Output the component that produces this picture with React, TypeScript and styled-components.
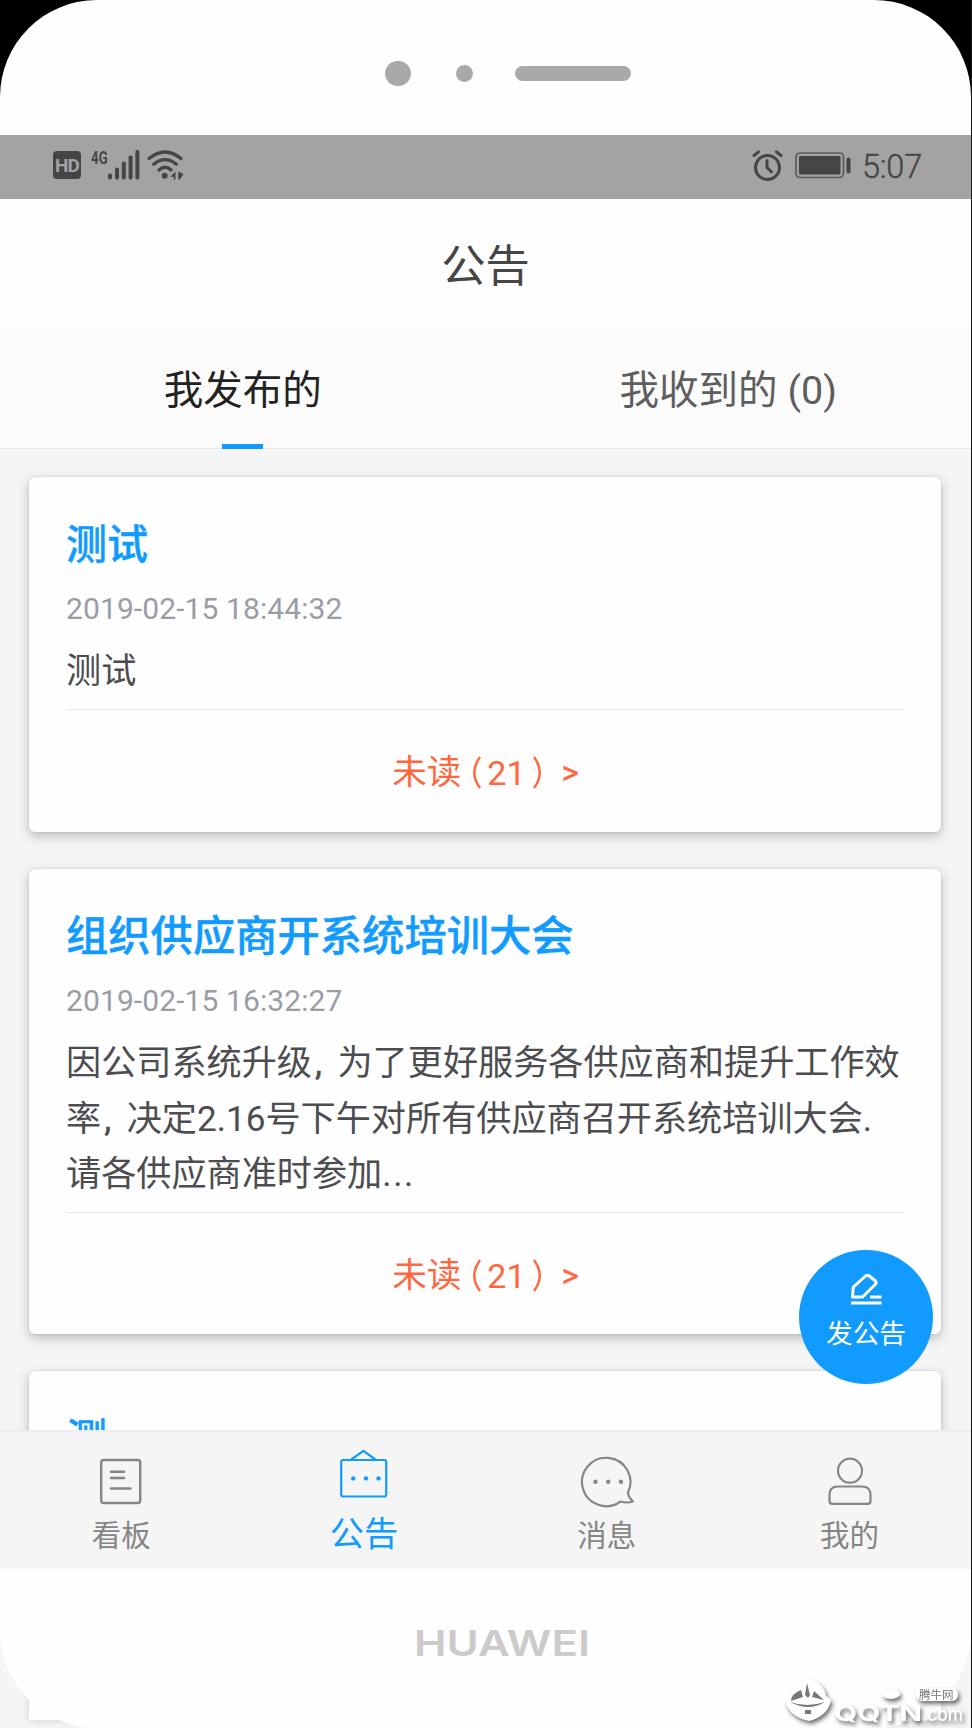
import React from 'react';
import styled, { createGlobalStyle } from 'styled-components';

const BLUE = '#129bff';
const INK = '#454545';
const GREY = '#858585';
const ORANGE = '#ff673f';

const GlobalStyle = createGlobalStyle`
  * { box-sizing: border-box; }
  html, body { margin: 0; padding: 0; }
  body {
    font-family: Roboto, 'Noto Sans CJK SC', sans-serif;
    background: #f5f5f5;
    overflow: hidden;
  }
  svg { display: block; flex: none; }
`;

const Phone = styled.div`
  position: relative;
  display: flex;
  flex-direction: column;
  width: 972px;
  height: 1728px;
  border-right: 1px solid #14171a;
  background: #f5f5f5;
  overflow: hidden;
`;

const TopBezel = styled.div`
  flex: none;
  height: 135px;
  background: #000;
`;

const TopShell = styled.div`
  display: flex;
  align-items: center;
  height: 135px;
  padding: 11px 0 0 385px;
  border-radius: 97px 97px 0 0;
  background: #fefefe;
`;

const Sensor = styled.span<{ $w: number; $h: number; $gap: number }>`
  width: ${(p) => p.$w}px;
  height: ${(p) => p.$h}px;
  margin-right: ${(p) => p.$gap}px;
  border-radius: 14px;
  background: #a9a9a9;
`;

const StatusBar = styled.div`
  flex: none;
  display: flex;
  justify-content: space-between;
  align-items: center;
  height: 64px;
  padding: 0 49px 4px 53px;
  background: #a3a3a3;
  color: ${INK};
`;

const StatusGroup = styled.div`
  display: flex;
  align-items: center;
`;

const HdBadge = styled.span`
  width: 28px;
  height: 28px;
  margin: 0 10px 0 0;
  border-radius: 4px;
  background: ${INK};
  color: #a3a3a3;
  font: 700 19px/29px Roboto, sans-serif;
  text-align: center;
  letter-spacing: -0.8px;
`;

const Network = styled.span`
  width: 17px;
  height: 31px;
  font: 700 19px/16px Roboto, sans-serif;
  transform: scaleX(0.7);
  transform-origin: left;
  white-space: nowrap;
`;

const WifiSlot = styled.span`
  margin-left: 6px;
`;

const BatterySlot = styled.span`
  margin-left: 12px;
`;

const Clock = styled.span`
  margin-left: 11px;
  padding-top: 3px;
  font-size: 32.5px;
  font-weight: 300;
  line-height: 58px;
  letter-spacing: -0.2px;
  -webkit-text-stroke: 0.4px ${INK};
`;

const Header = styled.header`
  flex: none;
  height: 127px;
  background: #fefefe;
  color: ${INK};
  font-size: 44.3px;
  line-height: 137px;
  text-align: center;
`;

const Tabs = styled.nav`
  flex: none;
  display: flex;
  height: 123px;
  box-shadow: inset 0 -1px #e9e9e9;
  background: #fbfbfb;
`;

const Tab = styled.div<{ $active?: boolean }>`
  flex: 1;
  display: flex;
  flex-direction: column;
  align-items: center;
  padding-top: 6px;
  color: ${(p) => (p.$active ? '#222' : '#5e5e5e')};
  font-size: 39.5px;
  line-height: 117px;
  white-space: pre;
  &::after {
    content: '';
    flex: none;
    width: 41px;
    height: 6px;
    margin-top: -5px;
    background: ${(p) => (p.$active ? BLUE : 'transparent')};
  }
`;

const TabLabel = styled.span`
  height: 117px;
`;

const Feed = styled.main`
  flex: none;
  height: 981px;
  padding: 28px 30px 0 29px;
  overflow: hidden;
  background: #f5f5f5;
`;

const Card = styled.article<{ $h: number }>`
  height: ${(p) => p.$h}px;
  margin-bottom: 37px;
  padding: 39px 37px 0 37px;
  border-radius: 6px;
  background: #fefefe;
  box-shadow: 0 4px 12px rgba(0, 0, 0, 0.24), 0 0 2px rgba(0, 0, 0, 0.16);
`;

const CardTitle = styled.h2<{ $size?: number }>`
  margin: 0;
  height: 56px;
  color: ${BLUE};
  font-size: ${(p) => p.$size ?? 42.3}px;
  line-height: 58px;
  font-weight: 500;
  white-space: nowrap;
  -webkit-text-stroke: 0.4px ${BLUE};
`;

const CardDate = styled.time`
  display: block;
  height: 73px;
  color: #9a9da4;
  font-size: 30px;
  line-height: 73px;
  letter-spacing: 0.1px;
`;

const CardText = styled.p`
  position: relative;
  top: 3px;
  margin: -4px 0 0;
  color: #4c4d50;
  font-size: 35.15px;
  line-height: 55.5px;
  white-space: nowrap;
`;

const Comma = styled.span`
  display: inline-block;
  width: 25.5px;
  padding-left: 3px;
  -webkit-text-stroke: 0.5px #4c4d50;
`;

const Ellipsis = styled.span`
  letter-spacing: 1.6px;
`;

const Unread = styled.div`
  display: flex;
  justify-content: center;
  align-items: center;
  height: 124px;
  margin-top: 12px;
  border-top: 1.5px solid #e9e9e9;
  color: ${ORANGE};
  font-size: 34.6px;
  line-height: 1;
  padding: 3px 0 0 1px;
  white-space: pre;
`;

const LeftParen = styled.span`
  margin-left: 11px;
`;

const Count = styled.span`
  margin: 0 7px 0 6px;
  font-size: 34px;
`;

const Arrow = styled.span`
  margin-left: 20px;
  font-size: 33px;
  -webkit-text-stroke: 0.4px ${ORANGE};
`;

const Compose = styled.button`
  position: absolute;
  left: 799px;
  top: 1250px;
  display: flex;
  flex-direction: column;
  align-items: center;
  width: 134px;
  height: 134px;
  padding: 23px 0 0;
  border: 0;
  border-radius: 50%;
  background: ${BLUE};
  color: #fff;
  font: 400 26.7px/51px 'Noto Sans CJK SC', sans-serif;
`;

const BottomNav = styled.nav`
  flex: none;
  display: flex;
  height: 139px;
  border-top: 2px solid #ededed;
  background: #f5f5f5;
`;

const NavItem = styled.div<{ $active?: boolean }>`
  flex: 1;
  display: flex;
  flex-direction: column;
  align-items: center;
  padding-top: ${(p) => (p.$active ? 14 : 20)}px;
  color: ${(p) => (p.$active ? BLUE : GREY)};
  font-size: ${(p) => (p.$active ? 34.3 : 29.5)}px;
  line-height: ${(p) => (p.$active ? 72 : 54)}px;
`;

const BottomBezel = styled.div`
  position: relative;
  flex: none;
  height: 159px;
  background: #f5f5f5;
  overflow: hidden;
`;

const CardPeek = styled.div`
  position: absolute;
  left: 29px;
  right: 30px;
  top: 0;
  height: 151px;
  background: #fefefe;
  box-shadow: 0 0 8px rgba(0, 0, 0, 0.16);
`;

const BottomShell = styled.div`
  position: relative;
  display: flex;
  height: 159px;
  padding: 50px 0 0 413px;
  border-radius: 0 0 97px 97px;
  background: #fefefe;
`;

const Watermark = styled.svg`
  position: absolute;
  left: 780px;
  top: 1674px;
  filter: drop-shadow(2px 3px 2px rgba(0, 0, 0, 0.55));
`;

const SignalIcon = () => (
  <svg width="33" height="30" viewBox="0 0 33 30" fill={INK}>
    <rect x="0" y="23.5" width="4" height="6" rx="1.8" />
    <rect x="7" y="17.5" width="4" height="12" rx="1.8" />
    <rect x="13.8" y="11.5" width="4" height="18" rx="1.8" />
    <rect x="20.6" y="5.5" width="4" height="24" rx="1.8" />
    <rect x="27.4" y="0" width="4" height="29.5" rx="1.8" />
  </svg>
);

const WifiIcon = () => (
  <svg width="37" height="30" viewBox="0 0 37 30" fill="none" stroke={INK} strokeWidth="3.3" strokeLinecap="round">
    <path d="M2 8.5Q18 -4.5 34 8.5M6.8 14.2Q18 5 29.2 14.2M12 20Q18 14.5 24 20" />
    <circle cx="17.7" cy="25.7" r="3" fill={INK} stroke="none" />
    <path d="M28.5 21.5V29.5H26.8V27L23.5 26.5ZM31.2 21.5L36.5 24L33 29.5H31.2Z" fill={INK} stroke="none" />
  </svg>
);

const AlarmIcon = () => (
  <svg width="31" height="31" viewBox="0 0 31 31" fill="none" stroke={INK} strokeWidth="3" strokeLinecap="round" strokeLinejoin="round">
    <circle cx="15.5" cy="17.5" r="12" />
    <path d="M15 10.5V17.5L19.5 22" />
    <path d="M2 5.5L6.5 1.8M24.5 1.8L29 5.5" />
  </svg>
);

const BatteryIcon = () => (
  <svg width="56" height="27" viewBox="0 0 56 27">
    <rect x="1" y="1" width="47.5" height="24.5" rx="4" fill="none" stroke="#5c5c5c" strokeWidth="1.7" />
    <rect x="4" y="4" width="41.5" height="18.5" rx="1" fill={INK} />
    <rect x="51.5" y="5.5" width="4" height="16" rx="2" fill={INK} />
  </svg>
);

const PenIcon = () => (
  <svg width="32" height="33" viewBox="0 0 32 33" fill="none" stroke="#fff" strokeWidth="3" strokeLinejoin="round">
    <path d="M2.5 24L3.3 14L15.5 3Q17.5 1.5 19.4 3L25 7.7Q27 9.5 25.2 11.5L12.5 24Z" />
    <path d="M20 24H31.5M1 30H31.5" />
  </svg>
);

const BoardIcon = () => (
  <svg width="42" height="57" viewBox="0 0 42 57" fill="none" stroke={GREY} strokeWidth="2.4" strokeLinecap="round">
    <rect x="1.2" y="8" width="39" height="43" rx="2.5" />
    <path d="M11 19.7H24M11 26H24M11 36.5H30.5" />
  </svg>
);

const NoticeIcon = () => (
  <svg width="48" height="52" viewBox="0 0 48 52" fill="none" stroke={BLUE} strokeWidth="2.2">
    <rect x="1.2" y="14" width="45" height="36.5" rx="2" />
    <path d="M10.5 14L23.5 4.8L36 14" strokeLinejoin="round" />
    <g fill={BLUE} stroke="none">
      <circle cx="13.2" cy="32.4" r="2.2" />
      <circle cx="26" cy="32.4" r="2.2" />
      <circle cx="38.5" cy="32.4" r="2.2" />
    </g>
  </svg>
);

const ChatIcon = () => (
  <svg width="54" height="57" viewBox="0 0 54 57" fill="none" stroke={GREY} strokeWidth="2.2" strokeLinejoin="round">
    <path d="M40.5 49.5A24.2 24.2 0 1 1 48 40.5Q47.8 44.5 53 49.5Q47 51.5 40.5 49.5Z" />
    <g fill={GREY} stroke="none">
      <circle cx="15.5" cy="29.7" r="2.2" />
      <circle cx="28.2" cy="29.7" r="2.2" />
      <circle cx="41" cy="29.7" r="2.2" />
    </g>
  </svg>
);

const PersonIcon = () => (
  <svg width="44" height="57" viewBox="0 0 44 57" fill="none" stroke={GREY} strokeWidth="2.2">
    <circle cx="22" cy="18.7" r="12" />
    <path d="M10 34.5H34Q42.5 34.5 42.5 43V49Q42.5 51.8 39.7 51.8H4.3Q1.5 51.8 1.5 49V43Q1.5 34.5 10 34.5Z" />
  </svg>
);

const UnreadLink = ({ count }: { count: number }) => (
  <Unread>
    <span>未读</span>
    <LeftParen>
      <svg width="9" height="33" viewBox="0 0 9 33" fill="none" stroke={ORANGE} strokeWidth="2.4">
        <path d="M8 1Q-3.5 16.5 8 32" />
      </svg>
    </LeftParen>
    <Count>{count}</Count>
    <svg width="9" height="33" viewBox="0 0 9 33" fill="none" stroke={ORANGE} strokeWidth="2.4">
      <path d="M1 1Q12.5 16.5 1 32" />
    </svg>
    <Arrow>&gt;</Arrow>
  </Unread>
);

export default function App() {
  return (
    <Phone>
      <GlobalStyle />
      <TopBezel>
        <TopShell>
          <Sensor $w={26} $h={25} $gap={45} />
          <Sensor $w={17} $h={17} $gap={42} />
          <Sensor $w={116} $h={15} $gap={0} />
        </TopShell>
      </TopBezel>

      <StatusBar>
        <StatusGroup>
          <HdBadge>HD</HdBadge>
          <Network>4G</Network>
          <SignalIcon />
          <WifiSlot>
            <WifiIcon />
          </WifiSlot>
        </StatusGroup>
        <StatusGroup>
          <AlarmIcon />
          <BatterySlot>
            <BatteryIcon />
          </BatterySlot>
          <Clock>5:07</Clock>
        </StatusGroup>
      </StatusBar>

      <Header>公告</Header>
      <Tabs>
        <Tab $active>
          <TabLabel>我发布的</TabLabel>
        </Tab>
        <Tab>
          <TabLabel>我收到的 (0)</TabLabel>
        </Tab>
      </Tabs>

      <Feed>
        <Card $h={355}>
          <CardTitle $size={41}>测试</CardTitle>
          <CardDate>2019-02-15 18:44:32</CardDate>
          <CardText>测试</CardText>
          <UnreadLink count={21} />
        </Card>
        <Card $h={465}>
          <CardTitle>组织供应商开系统培训大会</CardTitle>
          <CardDate>2019-02-15 16:32:27</CardDate>
          <CardText>
            因公司系统升级<Comma>,</Comma>为了更好服务各供应商和提升工作效
            <br />
            率<Comma>,</Comma>决定2.16号下午对所有供应商召开系统培训大会.
            <br />
            请各供应商准时参加<Ellipsis>...</Ellipsis>
          </CardText>
          <UnreadLink count={21} />
        </Card>
        <Card $h={355}>
          <CardTitle $size={41}>测</CardTitle>
        </Card>
      </Feed>

      <BottomNav>
        <NavItem>
          <BoardIcon />
          看板
        </NavItem>
        <NavItem $active>
          <NoticeIcon />
          公告
        </NavItem>
        <NavItem>
          <ChatIcon />
          消息
        </NavItem>
        <NavItem>
          <PersonIcon />
          我的
        </NavItem>
      </BottomNav>

      <BottomBezel>
        <CardPeek />
        <BottomShell>
          <svg width="180" height="50" viewBox="0 0 180 50">
            <text x="1" y="37" textLength="176" lengthAdjust="spacingAndGlyphs" fontFamily="Inter, sans-serif" fontWeight="600" fontSize="35.5" fill="#cbcbcb">
              HUAWEI
            </text>
          </svg>
        </BottomShell>
      </BottomBezel>

      <Compose>
        <PenIcon />
        发公告
      </Compose>

      <Watermark width="190" height="54" viewBox="0 0 190 54" fill="#fff">
        <path d="M28 5C39 6 45 14 46 22L51 26C49 37 41 44 29 47C16 44 8 38 5 27L11 21C12 12 18 6 28 5Z" />
        <g fill="#777">
          <path d="M27 9L30 21L28 24L25 21ZM21 16Q11 20 11 27L23 23ZM34 17L44 26L32 23ZM10 28Q27 34 45 28Q29 38 10 28ZM25 36H31V40H25Z" />
        </g>
        <ellipse cx="111" cy="20" rx="9" ry="5" />
        <rect x="136" y="14" width="42" height="13" rx="6" />
        <text x="54" y="47" textLength="88" lengthAdjust="spacingAndGlyphs" fontFamily="Inter, sans-serif" fontWeight="700" fontSize="22">
          QQTN
        </text>
        <text x="142" y="47" textLength="41" lengthAdjust="spacingAndGlyphs" fontFamily="Inter, sans-serif" fontWeight="500" fontSize="19">
          .com
        </text>
        <text x="139" y="25" fontFamily="'Noto Sans CJK SC', sans-serif" fontSize="11.5" fill="#777">
          腾牛网
        </text>
      </Watermark>
    </Phone>
  );
}
